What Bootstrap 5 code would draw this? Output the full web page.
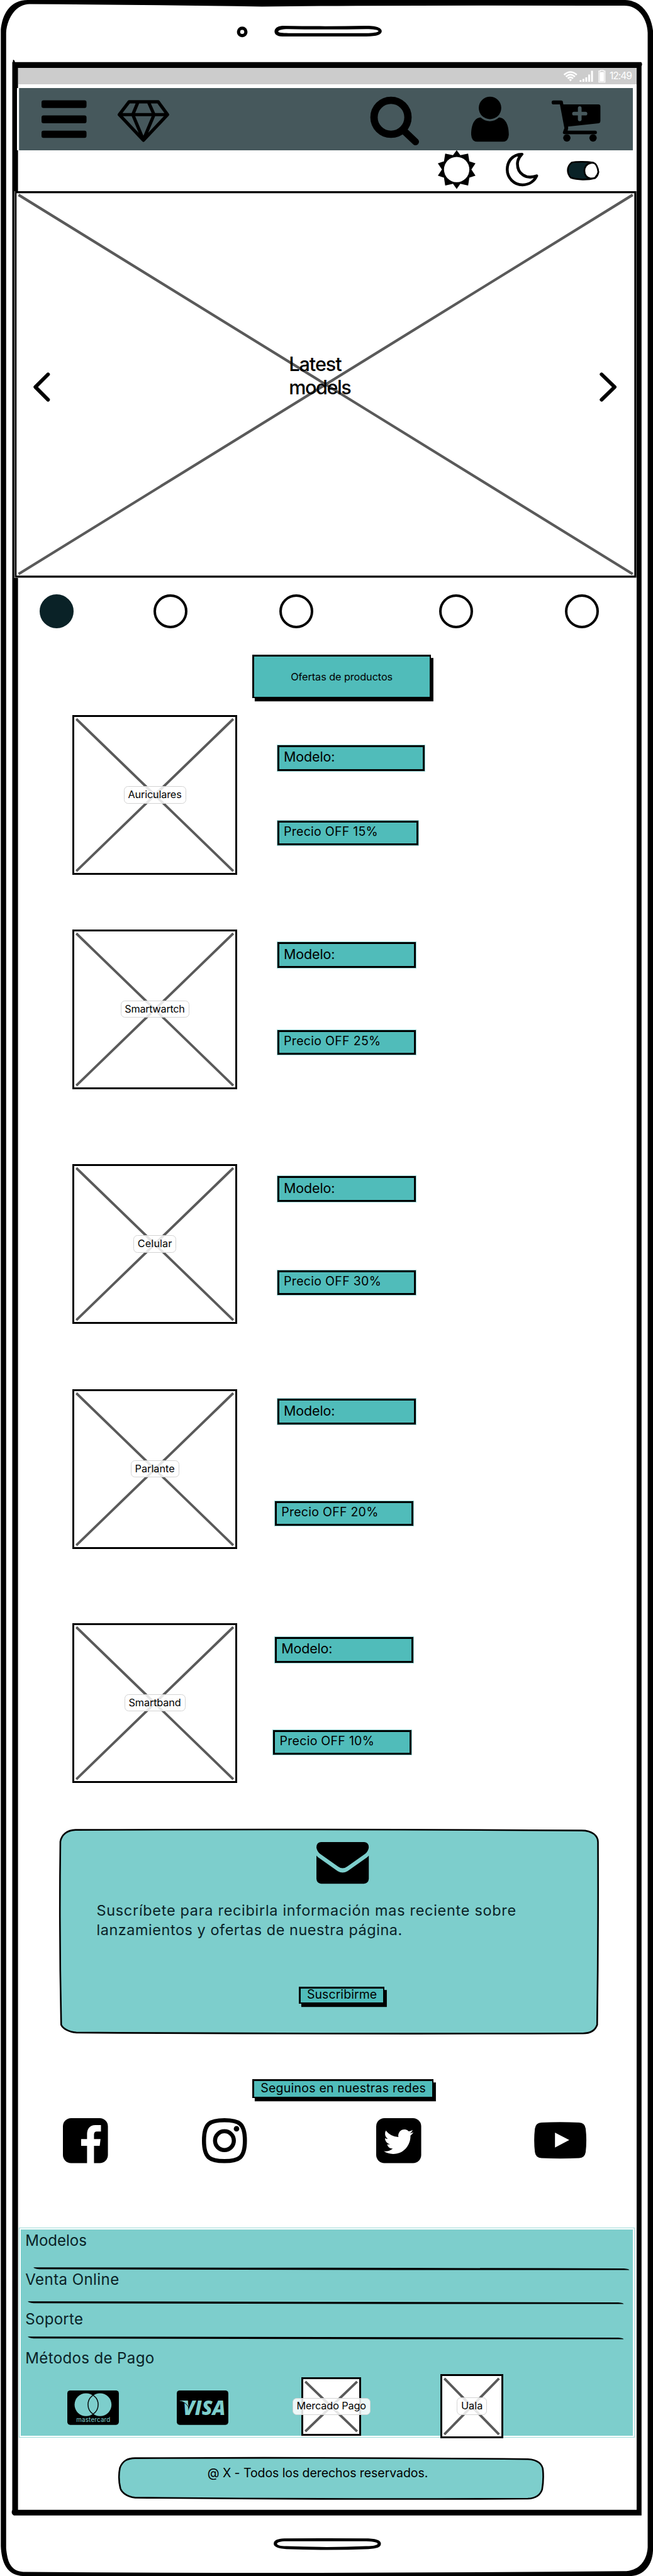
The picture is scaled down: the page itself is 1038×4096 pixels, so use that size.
<!DOCTYPE html>
<html lang="es">
<head>
<meta charset="utf-8">
<meta name="viewport" content="width=device-width, initial-scale=1">
<title>Tienda móvil</title>
<link href="https://cdn.jsdelivr.net/npm/bootstrap@5.3.0/dist/css/bootstrap.min.css" rel="stylesheet">
<style>
/* 1rem = 100 units of the wireframe */
html{font-size:65.038px}
body{margin:0;width:1038px;height:4096px;overflow:hidden;background:#fff;color:#000;font-family:Inter,"Noto Sans",sans-serif;font-size:.3rem;line-height:1}
svg{display:block;flex:none;overflow:visible}
.fit{white-space:nowrap}
.phone{width:15.96rem;height:62.98rem;position:relative}
.bezel{position:absolute;inset:0;width:15.96rem;height:62.98rem}
.viewport{position:relative;margin-left:.44rem;width:15.12rem;padding-top:1.66rem}
.statusbar{height:.4rem;background:#ccc;color:#fff;font-size:.24rem;padding-right:.11rem}
.topnav{height:1.52rem;margin:.1rem .09rem 0 -.03rem;position:relative;background:#46585c;padding:0 .8rem 0 .6rem;box-shadow:.05rem 0 0 #fff inset}
.g-diamond{margin-left:.77rem}.g-person{margin-left:1.27rem}.g-cart{margin-left:1.04rem}
.modebar{height:1rem;padding-right:.92rem}
.g-moon{margin-left:.74rem}.g-toggle{margin-left:.7rem}
.hero{position:relative;height:9.45rem;width:15.2rem;margin-left:-.08rem;background:#fff}
.hero .cross{position:absolute;inset:0}
.hero-row{position:relative;padding:3.93rem .48rem 0 .45rem}
.hero-title{font-size:.47rem;font-weight:500;line-height:.57rem;margin-right:6.07rem;margin-left:5.84rem;width:1.53rem}
.hero-row svg{margin-top:.5rem}
.dots{height:.84rem;margin-top:.4rem;padding-left:.535rem}
.dot{width:.83rem;height:.83rem;border:.07rem solid #000;border-radius:50%;flex:none}
.dot.on{background:#0a2227;border-color:#0a2227}
.d2{margin-left:1.95rem}.d3{margin-left:2.25rem}.d4{margin-left:3.07rem}.d5{margin-left:2.25rem}
.tealbtn{background:#50bcba;border:.05rem solid #000;border-width:.05rem .035rem .035rem .05rem;box-shadow:.06rem .08rem 0 #000;border-radius:0;padding:0;color:#000;line-height:1;font-size:.3rem}
.offers{width:4.37rem;height:1.06rem;margin:.64rem 0 0 5.72rem;font-size:.25rem}
.product{height:3.91rem;margin-left:1.33rem}
.pic{position:relative;width:4.03rem;height:100%;border:.05rem solid #000;background:#fff;flex:none}
.pic>svg{position:absolute;inset:0;width:100%;height:100%}
.chip{position:relative;border:.02rem solid #d3d3d3;border-radius:.1rem;background:rgba(255,255,255,.85);font-size:.25rem;height:.42rem;padding:0 .09rem .03rem;flex:none;margin:0 -.3rem}
.field{background:#50bcba;border:.05rem solid #000;width:3.38rem;height:.63rem;padding:0 0 .04rem .11rem;font-size:.33rem;outline:1px solid rgba(80,188,186,.6)}
.field.price{font-size:.3rem;height:.6rem}
.info{margin-left:.98rem}
.p1{margin-top:.41rem}.p1 .info{padding-top:.74rem}.p1 .field{width:3.6rem}.p1 .price{width:3.44rem;margin-top:1.21rem}
.p2{margin-top:1.33rem}.p2 .info{padding-top:.32rem}.p2 .price{margin-top:1.51rem}
.p3{margin-top:1.83rem}.p3 .info{padding-top:.3rem}.p3 .price{margin-top:1.67rem}
.p4{margin-top:1.59rem}.p4 .info{padding-top:.24rem}.p4 .price{margin:1.87rem 0 0 -.06rem}
.p5{margin-top:1.81rem}.p5 .info{padding-top:.34rem;margin-left:.92rem}.p5 .price{margin:1.65rem 0 0 -.04rem}
.signup{position:relative;width:13.19rem;height:5.02rem;margin:1.13rem 0 0 1.01rem;background:none;border:0;border-radius:0}
.signup>svg.bgshape,.legal>svg{position:absolute;inset:0}
.signup .inner{position:relative;padding-top:.31rem}
.signup .mail{margin-left:6.29rem}
.signup p{font-size:.36rem;line-height:.48rem;color:#0a2227;margin:.41rem 0 0 .91rem}
.subscribe{width:2.1rem;height:.42rem;margin:1.15rem 0 0 5.85rem;padding-bottom:.02rem}
.follow{width:4.44rem;height:.46rem;margin:1.09rem 0 0 5.72rem;padding-bottom:.02rem}
.social{height:1.1rem;margin:.49rem 0 0 1.09rem}
.s2{margin-left:2.3rem}.s3{margin-left:3.16rem}.s4{margin-left:2.77rem}
.sitemap{height:5.04rem;width:14.97rem;margin:1.63rem 0 0 .06rem;background:#7dcecc;color:#0a2227;font-size:.37rem;position:relative;outline:.015rem solid #9fdbd9;outline-offset:.045rem}
.sitemap a{color:inherit;text-decoration:none;display:block;line-height:.5rem;margin-left:.12rem}
/* footer rows: spacing between the links and their hand-drawn rules */
.lk1{padding-top:.03rem;height:.92rem}
.lk2{height:.78rem;margin-top:-.04rem}
.lk3{height:.76rem;padding-top:.09rem}
.lk4{height:.81rem;padding-top:.18rem}
.r1{margin-left:.31rem}.r2,.r3{margin-left:.18rem}
.pay{margin-left:1.14rem}
.c1{margin-top:.4rem}.c2{margin:.4rem 0 0 1.42rem}
.mp{margin:.08rem 0 0 1.79rem}.uala{margin-left:1.94rem}
.paybox{height:1.43rem;width:1.46rem}.paybox .chip{color:#000}
.paybox.uala{width:1.53rem;height:1.58rem}
.legal{position:relative;width:10.4rem;height:1.03rem;margin:.52rem 0 0 2.45rem}
.legal span{position:relative;margin:.25rem 0 0 2.18rem;display:inline-block;font-size:.3rem;line-height:.3rem}
</style>
</head>
<body>
<div class="phone">
<svg class="bezel" viewBox="0 0 1596 6298">
  <path fill-rule="evenodd" d="M2 72C6 35 24 0 68 0H1528C1572 2 1592 40 1596 75V6236C1594 6275 1570 6298 1540 6298H60C20 6298 4 6270 2 6225ZM15 80V6230C18 6262 25 6288 62 6288Q800 6293 1525 6286C1560 6286 1581 6262 1583 6228V80C1582 48 1562 14 1526 14Q1000 12 640 16Q300 11 72 10C42 10 18 40 15 80Z"/>
  <path fill-rule="evenodd" d="M30 152H1567Q1571 156 1568 162V6150H34Q26 6146 30 6136ZM44 166V6136H1556V166Z"/><path d="M32 146q4 0 5 8h-6z"/>
  <path fill-rule="evenodd" d="M690 63Q800 65 890 63C925 62 933 70 933 76C933 84 922 89 895 89H690C675 89 671 83 671 77C671 70 677 64 690 63ZM705 71C688 71 680 74 680 77C680 80 690 81 705 81H895C910 81 925 79 925 76C925 73 912 71 895 71Q800 73 705 71Z"/>
  <circle cx="592" cy="78" r="9" fill="none" stroke="#000" stroke-width="8"/>
  <path fill-rule="evenodd" d="M695 6206Q800 6205 900 6206C925 6207 931 6213 931 6219C931 6227 922 6231 900 6232Q800 6236 700 6232C680 6231 669 6226 669 6219C669 6210 678 6207 695 6206ZM700 6213C685 6213 677 6216 677 6219C677 6222 685 6225 700 6225Q800 6229 895 6225C912 6225 923 6222 923 6219C923 6216 915 6214 895 6213Z"/>
</svg>
<main class="viewport">
  <div class="statusbar d-flex align-items-center justify-content-end">
    <svg style="width:1.13rem;height:.4rem" viewBox="1377 166 113 40">
      <g fill="none" stroke="#fff" stroke-width="4"><path d="M1378 183Q1393.500 169 1409 183M1382.500 187.500Q1393.500 177 1404.500 187.500M1387 192Q1393.500 186 1400 192"/></g>
      <path fill="#fff" d="M1390 195q3.500-3 7 0l-3.500 4zM1416 196h4.500v4h-4.500zM1423 193h4.500v7h-4.500zM1430 189h4.500v11h-4.500zM1437 182h4.500v18h-4.500zM1444 173h4.500v27h-4.500zM1465 176h11v23h-11z"/>
      <path fill="none" stroke="#fff" stroke-width="1.800" d="M1463 173.500h4v-1.500h7v1.500h4v27.500h-15z"/>
    </svg>
    <span class="fit" data-w="55">12:49</span>
  </div>
  <nav class="topnav navbar d-flex flex-nowrap justify-content-start align-items-start">
    <svg style="width:1.1rem;height:1.52rem" viewBox="101 216 110 152"><rect x="101" y="246" width="110" height="19" rx="5"/><rect x="101" y="283" width="110" height="19" rx="5"/><rect x="101" y="320" width="110" height="18" rx="5"/></svg>
    <svg class="g-diamond me-auto" style="width:1.26rem;height:1.52rem" viewBox="288 216 126 152"><path fill="none" stroke="#000" stroke-width="8" stroke-linejoin="round" d="M316 249.500H387L410 281L351 343.500L292 281ZM292 281H410M338 249.500L325 281L351 343L377 281L363 249.500"/></svg>
    <svg style="width:1.19rem;height:1.52rem" viewBox="906 216 119 152"><g fill="none" stroke="#000" stroke-width="18"><circle cx="956" cy="287.500" r="41.500"/><path stroke-width="17" stroke-linecap="round" d="M987 320L1016 347.500"/></g></svg>
    <svg class="g-person" style="width:.92rem;height:1.52rem" viewBox="1152 216 92 152"><ellipse cx="1198" cy="264.500" rx="27.500" ry="27.500"/><path d="M1175 288C1160 289 1152 305 1152 330Q1153 347 1167 347H1229Q1243 347 1244 330C1244 305 1235 289 1220 288C1207 300 1188 300 1175 288Z"/></svg>
    <svg class="g-cart" style="width:1.19rem;height:1.52rem" viewBox="1348 216 119 152"><path d="M1352.500 246.500h18q5 0 5 5l1 4.500h85.500q5 0 5 5v36q0 4-4 5l-75 8q1 4-1 10h67a4.500 4.500 0 0 1 0 9h-74q-7-1-4-7l3-8-11-58h-15.500a4.700 4.700 0 0 1 0-9.500z"/><circle cx="1385" cy="338" r="9"/><circle cx="1449" cy="338" r="9"/><path stroke="#46585c" stroke-width="9" stroke-linecap="round" d="M1416.500 265v27.500M1402.500 278.500h28"/></svg>
  </nav>
  <div class="modebar d-flex justify-content-end">
    <svg style="width:.92rem;height:1rem" viewBox="1070 368 92 100"><g transform="translate(1116 415)"><path d="M0-47.500L9-35L28-39L31-20L46-15L36 0L46 15L31 20L28 39L9 35L0 47.500L-9 35L-28 39L-31 20L-46 15L-36 0L-46-15L-31-20L-28-39L-9-35Z"/><circle r="31" fill="#fff"/></g></svg>
    <svg class="g-moon" style="width:.79rem;height:1rem" viewBox="1236 368 79 100"><path fill="none" stroke="#000" stroke-width="7" stroke-linejoin="round" d="M1275.500 377.500C1252 378 1239.500 395 1239.500 415A37.500 37.500 0 0 0 1277 452.500C1294 452 1306 443 1311.500 430.500C1285 440 1264 425 1264.500 400C1265 389 1270 383 1275.500 377.500Z"/></svg>
    <svg class="g-toggle" style="width:.79rem;height:1rem" viewBox="1385 368 79 100"><path fill="#0a2227" stroke="#000" stroke-width="4" d="M1397 398C1410 395 1435 396 1449 398C1457 402 1461 412 1462 421C1461 429 1458 433 1454 436C1435 441 1410 440 1395 435C1385 425 1384 408 1397 398Z"/><path fill="#fff" stroke="#000" stroke-width="4" d="M1444 399C1434 400 1428 409 1428 418C1428 428 1434 436 1443 437Q1450 437 1454 435Q1461 428 1462 421Q1460 405 1453 400Q1449 398 1444 399Z"/></svg>
  </div>
  <section class="hero">
    <svg class="cross" style="width:15.2rem;height:9.45rem" viewBox="36 468 1520 945"><path stroke="#5a5a5a" stroke-width="6.500" d="M46 477L1547 1404M1547 477L46 1404"/><path fill-rule="evenodd" d="M37 468H1556V1413H37ZM41 473V1408H1551V473Z"/></svg>
    <div class="hero-row d-flex align-items-start">
      <svg style="width:.41rem;height:.72rem" viewBox="81 911 41 72"><path fill="none" stroke="#000" stroke-width="9" stroke-linecap="round" stroke-linejoin="round" d="M117 916L86 947L117 978"/></svg>
      <div class="hero-title"><span class="fit d-inline-block" data-w="130">Latest</span><br><span class="fit d-inline-block" data-w="153">models</span></div>
      <svg style="width:.42rem;height:.72rem" viewBox="1466 911 42 72"><path fill="none" stroke="#000" stroke-width="9" stroke-linecap="round" stroke-linejoin="round" d="M1471 916L1503 947L1471 978"/></svg>
    </div>
  </section>
  <div class="dots d-flex"><span class="dot on"></span><span class="dot d2"></span><span class="dot d3"></span><span class="dot d4"></span><span class="dot d5"></span></div>
  <div class="tealbtn offers d-flex align-items-center justify-content-center"><span class="fit" data-w="249">Ofertas de productos</span></div>

  <article class="product p1 d-flex">
    <div class="pic d-flex align-items-center justify-content-center"><svg viewBox="0 0 393 381" preserveAspectRatio="none"><path stroke="#5a5a5a" stroke-width="6" d="M5 5L388 376M388 5L5 376"/></svg><span class="chip d-flex align-items-center"><span class="fit" data-w="131">Auriculares</span></span></div>
    <div class="info"><div class="field d-flex align-items-center"><span class="fit" data-w="125">Modelo:</span></div><div class="field price d-flex align-items-center"><span class="fit" data-w="230">Precio OFF 15%</span></div></div>
  </article>
  <article class="product p2 d-flex">
    <div class="pic d-flex align-items-center justify-content-center"><svg viewBox="0 0 393 381" preserveAspectRatio="none"><path stroke="#5a5a5a" stroke-width="6" d="M5 5L388 376M388 5L5 376"/></svg><span class="chip d-flex align-items-center"><span class="fit" data-w="147">Smartwartch</span></span></div>
    <div class="info"><div class="field d-flex align-items-center"><span class="fit" data-w="125">Modelo:</span></div><div class="field price d-flex align-items-center"><span class="fit" data-w="237">Precio OFF 25%</span></div></div>
  </article>
  <article class="product p3 d-flex">
    <div class="pic d-flex align-items-center justify-content-center"><svg viewBox="0 0 393 381" preserveAspectRatio="none"><path stroke="#5a5a5a" stroke-width="6" d="M5 5L388 376M388 5L5 376"/></svg><span class="chip d-flex align-items-center"><span class="fit" data-w="84">Celular</span></span></div>
    <div class="info"><div class="field d-flex align-items-center"><span class="fit" data-w="125">Modelo:</span></div><div class="field price d-flex align-items-center"><span class="fit" data-w="238">Precio OFF 30%</span></div></div>
  </article>
  <article class="product p4 d-flex">
    <div class="pic d-flex align-items-center justify-content-center"><svg viewBox="0 0 393 381" preserveAspectRatio="none"><path stroke="#5a5a5a" stroke-width="6" d="M5 5L388 376M388 5L5 376"/></svg><span class="chip d-flex align-items-center"><span class="fit" data-w="97">Parlante</span></span></div>
    <div class="info"><div class="field d-flex align-items-center"><span class="fit" data-w="125">Modelo:</span></div><div class="field price d-flex align-items-center"><span class="fit" data-w="237">Precio OFF 20%</span></div></div>
  </article>
  <article class="product p5 d-flex">
    <div class="pic d-flex align-items-center justify-content-center"><svg viewBox="0 0 393 381" preserveAspectRatio="none"><path stroke="#5a5a5a" stroke-width="6" d="M5 5L388 376M388 5L5 376"/></svg><span class="chip d-flex align-items-center"><span class="fit" data-w="128">Smartband</span></span></div>
    <div class="info"><div class="field d-flex align-items-center"><span class="fit" data-w="125">Modelo:</span></div><div class="field price d-flex align-items-center"><span class="fit" data-w="231">Precio OFF 10%</span></div></div>
  </article>

  <section class="signup card">
    <svg class="bgshape" style="width:13.19rem;height:5.02rem" viewBox="145 4471 1319 502"><path fill="#7dcecc" stroke="#000" stroke-width="4" d="M185 4473.500Q800 4471 1422 4475C1448 4475 1462 4488 1462 4503Q1463 4730 1460 4950C1455 4965 1444 4971 1425 4971Q800 4973 187 4969C168 4968 153 4958 150 4950Q145 4720 148 4502C151 4486 164 4474 185 4473.500Z"/></svg>
    <div class="inner">
      <svg class="mail" style="width:1.28rem;height:1.02rem" viewBox="0 0 128 102"><path d="M11 0H117Q128 1 128 13Q127 22 119 29L75 60Q64 68 53 60L9 29Q1 22 0 13Q0 1 11 0ZM0 33Q3 37 8 40L52 71Q64 78 76 71L120 40Q125 37 128 33V90Q127 101 116 102H12Q1 101 0 90Z"/></svg>
      <p><span class="fit d-inline-block" data-w="1025">Suscríbete para recibirla información mas reciente sobre</span><br><span class="fit d-inline-block" data-w="747">lanzamientos y ofertas de nuestra página.</span></p>
      <button type="button" class="tealbtn subscribe d-flex align-items-center justify-content-center"><span class="fit" data-w="171">Suscribirme</span></button>
    </div>
  </section>

  <div class="tealbtn follow d-flex align-items-center justify-content-center"><span class="fit" data-w="404">Seguinos en nuestras redes</span></div>
  <div class="social d-flex align-items-center">
    <svg style="width:1.1rem;height:1.1rem" viewBox="0 0 110 110"><path d="M20 0H90A20 20 0 0 1 110 20V90A20 20 0 0 1 90 110H76V67.500H90L92 51H76V40Q76 32.500 83 32.500H93V17H79Q60 18 59 38V51H44.500V67.500H59V110H20A20 20 0 0 1 0 90V20A20 20 0 0 1 20 0Z"/></svg>
    <svg class="s2" style="width:1.1rem;height:1.1rem" viewBox="0 0 110 110"><g fill="none" stroke="#000" stroke-width="10"><path d="M55 5C90 5 105 12 105 55S90 105 55 105S5 98 5 55S20 5 55 5Z"/><circle cx="55" cy="55" r="23"/></g><circle cx="84.500" cy="26" r="6.700"/></svg>
    <svg class="s3" style="width:1.1rem;height:1.1rem" viewBox="0 0 110 110"><rect width="110" height="110" rx="20"/><path fill="#fff" transform="translate(18.500 18.300) scale(4.540 4.620)" d="M5.026 15c6.038 0 9.341-5.003 9.341-9.334 0-.14 0-.282-.006-.422A6.685 6.685 0 0 0 16 3.542a6.658 6.658 0 0 1-1.889.518 3.301 3.301 0 0 0 1.447-1.817 6.533 6.533 0 0 1-2.087.793A3.286 3.286 0 0 0 7.875 6.030a9.325 9.325 0 0 1-6.767-3.429 3.289 3.289 0 0 0 1.018 4.382A3.323 3.323 0 0 1 .64 6.575v.045a3.288 3.288 0 0 0 2.632 3.218 3.203 3.203 0 0 1-.865.115 3.230 3.230 0 0 1-.614-.057 3.283 3.283 0 0 0 3.067 2.277A6.588 6.588 0 0 1 .78 13.580a6.320 6.320 0 0 1-.78-.045A9.344 9.344 0 0 0 5.026 15z"/></svg>
    <svg class="s4" style="width:1.28rem;height:.9rem" viewBox="0 0 128 90"><path d="M18 1.500Q64-1 110 1.500Q124 2 126 16Q129.500 45 126 74Q124 88 110 88.500Q64 91 18 88.500Q4 88 2 74Q-1.500 45 2 16Q4 2 18 1.500Z"/><path fill="#fff" d="M51 26V62.500L86 44.300Z"/></svg>
  </div>

  <footer>
    <div class="sitemap">
      <a class="lk1" href="#"><span class="fit d-inline-block" data-w="150">Modelos</span></a>
      <svg class="r1" style="width:14.57rem;height:.1rem" viewBox="81 5540 1457 10"><path d="M81 5540.500Q800 5541 1525 5543Q1538 5544 1538 5547Q800 5547 95 5545Q82 5544 81 5540.500Z"/></svg>
      <a class="lk2" href="#"><span class="fit d-inline-block" data-w="229">Venta Online</span></a>
      <svg class="r2" style="width:14.57rem;height:.1rem" viewBox="81 5540 1457 10"><path d="M81 5540.500Q800 5541 1525 5543Q1538 5544 1538 5547Q800 5547 95 5545Q82 5544 81 5540.500Z"/></svg>
      <a class="lk3" href="#"><span class="fit d-inline-block" data-w="141">Soporte</span></a>
      <svg class="r3" style="width:14.57rem;height:.1rem" viewBox="81 5540 1457 10"><path d="M81 5540.500Q800 5541 1525 5543Q1538 5544 1538 5547Q800 5547 95 5545Q82 5544 81 5540.500Z"/></svg>
      <a class="lk4" href="#"><span class="fit d-inline-block" data-w="315">Métodos de Pago</span></a>
      <div class="pay d-flex align-items-start">
        <svg class="c1" style="width:1.26rem;height:.84rem" viewBox="0 0 126 84"><rect width="126" height="84" rx="7"/><g fill="#7dcecc"><circle cx="45.700" cy="34.800" r="28"/><circle cx="80" cy="34.800" r="28"/><text x="22" y="76.800" font-size="15" textLength="83">mastercard</text></g><path fill="none" stroke="#000" stroke-width="2.200" d="M63 11.500A28 28 0 0 1 63 58A28 28 0 0 1 63 11.500Z"/></svg>
        <svg class="c2" style="width:1.26rem;height:.84rem" viewBox="0 0 126 84"><rect width="126" height="84" rx="7"/><text x="15" y="59.500" fill="#7dcecc" font-family="Open Sans" font-weight="800" font-style="italic" font-size="49" textLength="104" lengthAdjust="spacingAndGlyphs">VISA</text><path fill="#7dcecc" d="M7 24.500H22Q26 25 27 29L29 41Q22 29 7 25Z"/><path fill="none" stroke="#000" stroke-width="1.500" d="M10 26Q24 30 30 43"/></svg>
        <div class="pic paybox mp d-flex align-items-center justify-content-center"><svg viewBox="0 0 136 133" preserveAspectRatio="none"><path stroke="#5a5a5a" stroke-width="6" d="M5 6L131 127M131 6L5 127"/></svg><span class="chip d-flex align-items-center"><span class="fit" data-w="170">Mercado Pago</span></span></div>
        <div class="pic paybox uala d-flex align-items-center justify-content-center"><svg viewBox="0 0 143 148" preserveAspectRatio="none"><path stroke="#5a5a5a" stroke-width="6" d="M5 6L138 142M138 6L5 142"/></svg><span class="chip d-flex align-items-center"><span class="fit" data-w="53">Uala</span></span></div>
      </div>
    </div>
    <div class="legal"><svg style="width:10.4rem;height:1.03rem" viewBox="289 6004 1040 103"><path fill="#7dcecc" stroke="#000" stroke-width="4" d="M330 6006.500Q800 6004 1290 6009C1315 6010 1326 6022 1327 6036Q1329 6060 1325 6083C1320 6098 1308 6105 1290 6105.500Q800 6108 330 6103C310 6101 297 6090 294 6080Q288 6055 293 6030C300 6012 312 6007 330 6006.500Z"/></svg><span class="fit" data-w="539">@ X - Todos los derechos reservados.</span></div>
  </footer>
</main>
</div>
<script src="https://cdn.jsdelivr.net/npm/bootstrap@5.3.0/dist/js/bootstrap.bundle.min.js"></script>
<script>
// Tracks each label out (or in) to the width given in wireframe units.
document.querySelectorAll('.fit').forEach(function (el) {
  var target = el.dataset.w * 0.65038, n = el.textContent.length;
  var now = el.getBoundingClientRect().width;
  el.style.letterSpacing = ((target - now) / (n - 1)).toFixed(3) + 'px';
  el.style.marginRight = (-(target - now) / (n - 1)).toFixed(3) + 'px';
});
</script>
</body>
</html>
